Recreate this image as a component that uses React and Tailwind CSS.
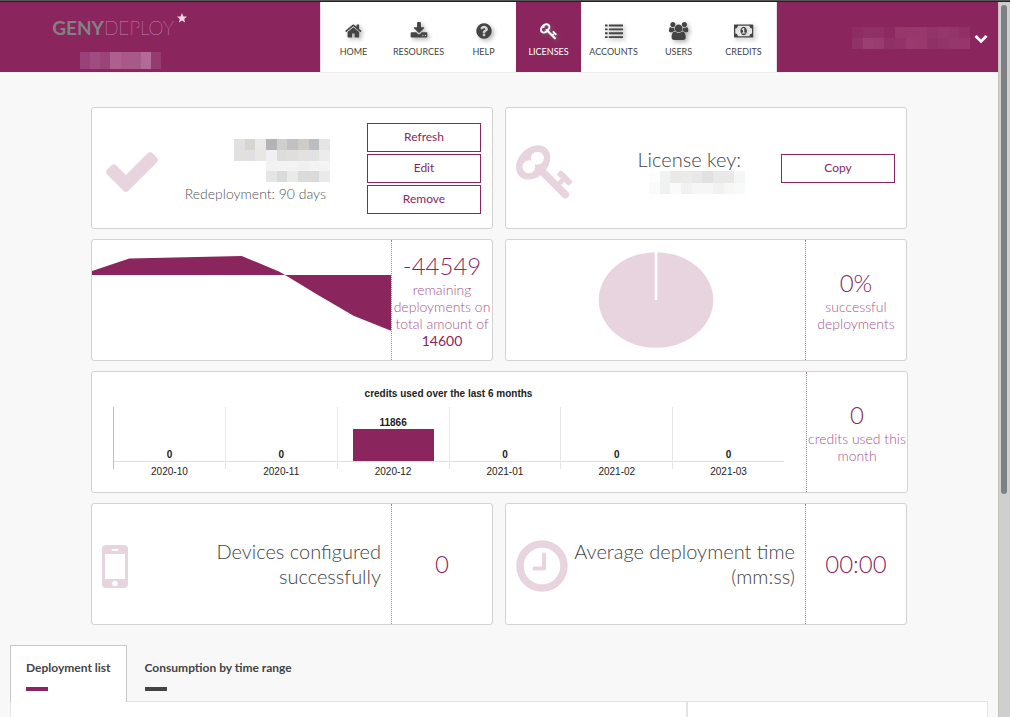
import React, { useState } from "react";

const ICONS = {
  home: {
    width: 1664,
    d: "M1408 992v480q0 26-19 45t-45 19h-384v-384h-256v384h-384q-26 0-45-19t-19-45v-480q0-1 .5-3t.5-3l575-474 575 474q1 2 1 6zm223-69l-62 74q-8 9-21 11h-3q-13 0-21-7l-692-577-692 577q-12 8-24 7-13-2-21-11l-62-74q-8-10-7-23.500t11-21.500l719-599q32-26 76-26t76 26l244 204v-195q0-14 9-23t23-9h192q14 0 23 9t9 23v408l219 182q10 8 11 21.500t-7 23.500z",
  },
  download: {
    width: 1792,
    d: "M1344 1344q0-26-19-45t-45-19-45 19-19 45 19 45 45 19 45-19 19-45zm256 0q0-26-19-45t-45-19-45 19-19 45 19 45 45 19 45-19 19-45zm128-224v320q0 40-28 68t-68 28h-1472q-40 0-68-28t-28-68v-320q0-40 28-68t68-28h465l135 136q58 56 136 56t136-56l136-136h464q40 0 68 28t28 68zm-325-569q17 41-14 70l-448 448q-18 19-45 19t-45-19l-448-448q-31-29-14-70 17-39 59-39h256v-448q0-26 19-45t45-19h256q26 0 45 19t19 45v448h256q42 0 59 39z",
  },
  help: {
    width: 1792,
    d: "M1024 1376v-192q0-14-9-23t-23-9h-192q-14 0-23 9t-9 23v192q0 14 9 23t23 9h192q14 0 23-9t9-23zm256-672q0-88-55.5-163t-138.5-116-170-41q-243 0-371 213-15 24 8 42l132 100q7 6 19 6 16 0 25-12 53-68 86-92 34-24 86-24 48 0 85.5 26t37.5 59q0 38-20 61t-68 45q-63 28-115.5 86.5t-52.5 125.5v36q0 14 9 23t23 9h192q14 0 23-9t9-23q0-19 21.500-49.500t54.500-49.500q32-18 49-28.500t46-35 44.500-48 28-60.500 12.500-81zm384 192q0 209-103 385.500t-279.500 279.500-385.500 103-385.500-103-279.500-279.500-103-385.500 103-385.500 279.500-279.500 385.500-103 385.500 103 279.500 279.500 103 385.500z",
  },
  key: {
    width: 1792,
    d: "M832 512q0-80-56-136t-136-56-136 56-56 136q0 42 19 83-41-19-83-19-80 0-136 56t-56 136 56 136 136 56 136-56 56-136q0-42-19-83 41 19 83 19 80 0 136-56t56-136zm851 704q0 17-49 66t-66 49q-9 0-28.500-16t-36.500-33-38.500-40-24.500-26l-96 96 220 220q28 28 28 68 0 42-39 81t-81 39q-40 0-68-28l-671-671q-176 131-365 131-163 0-265.500-102.500t-102.500-265.500q0-160 95-313t248-248 313-95q163 0 265.500 102.500t102.500 265.500q0 189-131 365l355 355 96-96q-3-3-26-24.500t-40-38.500-33-36.500-16-28.500q0-17 49-66t66-49q13 0 23 10 6 6 46 44.500t82 79.500 86.500 86 73 78 28.500 41z",
  },
  list: {
    width: 1792,
    d: "M0 256h256v192h-256zM384 256h1408v192h-1408zM0 640h256v192h-256zM384 640h1408v192h-1408zM0 1024h256v192h-256zM384 1024h1408v192h-1408zM0 1408h256v192h-256zM384 1408h1408v192h-1408z",
  },
  users: {
    width: 1920,
    d: "M593 896q-162 5-265 128h-134q-82 0-138-40.500t-56-118.500q0-353 124-353 6 0 43.500 21t97.500 42.500 119 21.500q67 0 133-23-5 37-5 66 0 139 81 256zm1071 637q0 120-73 189.500t-194 69.500h-874q-121 0-194-69.500t-73-189.500q0-53 3.500-103.500t14-109 26.500-108.500 43-97.500 62-81 85.500-53.500 111.500-20q10 0 43 21.500t73 48 107 48 135 21.500 135-21.500 107-48 73-48 43-21.500q61 0 111.500 20t85.500 53.500 62 81 43 97.500 26.500 108.500 14 109 3.500 103.500zm-1024-1277q0 106-75 181t-181 75-181-75-75-181 75-181 181-75 181 75 75 181zm704 384q0 159-112.500 271.500t-271.500 112.500-271.500-112.500-112.500-271.500 112.500-271.500 271.500-112.500 271.500 112.500 112.500 271.500zm576 225q0 78-56 118.500t-138 40.500h-134q-103-123-265-128 81-117 81-256 0-29-5-66 66 23 133 23 59 0 119-21.500t97.500-42.500 43.500-21q124 0 124 353zm-128-609q0 106-75 181t-181 75-181-75-75-181 75-181 181-75 181 75 75 181z",
  },
  money: {
    width: 1920,
    d: "M768 1152h384v-96h-128v-448h-114l-148 137 77 80q42-37 55-57h2v288h-128v96zm512-256q0 70-21 142t-59.500 134-101.500 101-138 39-138-39-101.500-101-59.500-134-21-142 21-142 59.500-134 101.500-101 138-39 138 39 101.500 101 59.500 134 21 142zm512 256v-512q-106 0-181-75t-75-181h-1152q0 106-75 181t-181 75v512q106 0 181 75t75 181h1152q0-106 75-181t181-75zm128-832v1152q0 26-19 45t-45 19h-1792q-26 0-45-19t-19-45v-1152q0-26 19-45t45-19h1792q26 0 45 19t19 45z",
  },
  check: {
    width: 1792,
    d: "M1671 566q0 40-28 68l-724 724-136 136q-28 28-68 28t-68-28l-136-136-362-362q-28-28-28-68t28-68l136-136q28-28 68-28t68 28l294 295 656-657q28-28 68-28t68 28l136 136q28 28 28 68z",
  },
  chevron: {
    width: 1792,
    d: "M1683 808l-742 741q-19 19-45 19t-45-19l-742-741q-19-19-19-45.500t19-45.500l166-165q19-19 45-19t45 19l531 531 531-531q19-19 45-19t45 19l166 165q19 19 19 45.500t-19 45.500z",
  },
};

const NAV = [
  { label: "HOME", icon: "home" },
  { label: "RESOURCES", icon: "download" },
  { label: "HELP", icon: "help" },
  { label: "LICENSES", icon: "key" },
  { label: "ACCOUNTS", icon: "list" },
  { label: "USERS", icon: "users" },
  { label: "CREDITS", icon: "money" },
];

const CREDITS = [
  { month: "2020-10", used: 0 },
  { month: "2020-11", used: 0 },
  { month: "2020-12", used: 11866 },
  { month: "2021-01", used: 0 },
  { month: "2021-02", used: 0 },
  { month: "2021-03", used: 0 },
];

const TABS = ["Deployment list", "Consumption by time range"];

// Masked values, one colour per block
const MASK_CUSTOMER = [["#98417a", "#9f4c80", "#9a457a", "#ad608f", "#aa5886", "#a65a88", "#b26b98", "#963b70"]];
const MASK_USER = [
  ["#8e2c63", "#8f3067", "#912f67", "#8c2961", "#953769", "#97386c", "#97386c", "#92336a", "#95366c", "#93356b", "#903067"],
  ["#92326a", "#9a3f72", "#983c70", "#8f3067", "#913369", "#99396e", "#98396e", "#903166", "#92346a", "#95376c", "#95376c"],
];
const MASK_LICENSE = [
  ["#e0e0e0", "#d6d5d0", "#e9e8e6", "#b3b3b8", "#cfcfcf", "#c1c1c3", "#cfcbc7", "#babec1", "#e4e5e7"],
  ["#e1e0df", "#e0e0e0", "#e8e7e6", "#eef0f3", "#dcdcda", "#dedede", "#e3e2e1", "#e0e2e3", "#ececec"],
  ["#ffffff", "#ffffff", "#ffffff", "#f3f2f1", "#f3f3f3", "#f3f3f3", "#f0f0f1", "#f3f3f3", "#f3f3f3"],
  ["#ffffff", "#ffffff", "#ffffff", "#e5e5e5", "#d8dbda", "#eaeae9", "#dbdbdb", "#dbdbdb", "#e9eaec"],
];
const MASK_KEY = [
  ["#fdfdfd", "#f1f2f2", "#e9e9e7", "#ebebea", "#e8e8e8", "#e1e1e1", "#e9e9e9", "#e9e9e8", "#f5f7f6"],
  ["#fafaf8", "#f0f2f2", "#fafafa", "#f1f1f2", "#f6f6f6", "#f6f6f6", "#f1f1f1", "#f7f7f5", "#f8faf9"],
];

const Icon = ({ name, className }) => (
  <svg
    viewBox={`0 0 ${ICONS[name].width} 1792`}
    className={`shrink-0 fill-current overflow-visible ${className}`}
    aria-hidden="true"
  >
    <path d={ICONS[name].d} />
  </svg>
);

const Mask = ({ rows, className }) => (
  <svg
    viewBox={`0 0 ${rows[0].length} ${rows.length}`}
    preserveAspectRatio="none"
    shapeRendering="crispEdges"
    className={className}
    aria-hidden="true"
  >
    {rows.map((row, y) =>
      row.map((fill, x) => (
        <rect key={`${x}-${y}`} x={x} y={y} width="1" height="1" fill={fill} />
      ))
    )}
  </svg>
);

const Card = ({ className = "", children }) => (
  <section
    className={`flex h-[122px] rounded-[3px] border border-[#d3d3d3] bg-white ${className}`}
  >
    {children}
  </section>
);

const Stat = ({ value, children }) => (
  <div className="flex w-[101px] shrink-0 flex-col items-center justify-center border-l border-dotted border-[#b9759b] text-center text-[#8a265d]">
    <div className="text-2xl leading-[30px] font-light">{value}</div>
    {children && (
      <div className="text-sm leading-[17px] font-light text-[#a8568a]">
        {children}
      </div>
    )}
  </div>
);

const OutlineButton = ({ children }) => (
  <button
    type="button"
    className="h-[29px] w-[114px] shrink-0 cursor-pointer border border-[#8a265d] text-xs leading-4 text-[#8a265d]"
  >
    {children}
  </button>
);

function Header() {
  return (
    <header className="flex h-[71px] border-b border-[#eeeeee] bg-[#8a265d]">
      <div className="w-80 shrink-0">
        <div className="flex w-60 flex-col items-center pt-[14px]">
          <a href="#home" className="flex text-[19px] leading-6 text-[#f3dcea]">
            <span className="font-bold text-[#828282]">GENY</span>
            <span className="font-thin">DEPLOY</span>
            <svg viewBox="0 0 12 12" className="-mt-1 ml-0.5 h-3 w-3 fill-[#efd5e4]" aria-hidden="true">
              <path d="M6 1l1.400 3.400 3.600.2-2.800 2.300.9 3.600L6 8.500l-3.100 2 .9-3.600L1 4.600l3.600-.2z" />
            </svg>
          </a>
          <Mask rows={MASK_CUSTOMER} className="mt-3 h-[17px] w-[81px]" />
        </div>
      </div>

      <nav className="flex shrink-0 border-x border-[#e6e0e3] bg-white">
        {NAV.map((item) => (
          <a
            key={item.label}
            href={`#${item.label.toLowerCase()}`}
            className={`flex h-[70px] w-[65px] flex-col items-center pt-5 text-[9px] leading-3 ${
              item.label === "LICENSES"
                ? "bg-[#8a265d] text-white"
                : "text-[#444444]"
            }`}
          >
            <Icon
              name={item.icon}
              className="mb-1.5 h-[18px] drop-shadow-[2px_2px_2px_rgba(120,120,120,0.6)]"
            />
            {item.label}
          </a>
        ))}
      </nav>

      <div className="flex flex-1 items-center justify-end pt-0.5 pr-[10px]">
        <button type="button" aria-label="Account menu" className="flex cursor-pointer items-center gap-1 text-white">
          <Mask rows={MASK_USER} className="h-[22px] w-[118px]" />
          <Icon name="chevron" className="h-[14px]" />
        </button>
      </div>
    </header>
  );
}

function CreditsChart() {
  const max = 20400;
  return (
    <div className="min-w-0 flex-1 pt-4 pr-[22px] pl-[21px] font-['Liberation_Sans',sans-serif] text-[10px] text-[#222222]">
      <h2 className="text-center leading-3 font-bold">
        credits used over the last 6 months
      </h2>
      <div className="mt-[7px] grid grid-cols-6">
        {CREDITS.map((c) => (
          <div
            key={c.month}
            className="h-[62px] border-l border-[#e6e6e6] text-center leading-3 first:border-[#bdbdbd]"
          >
            <div className="flex h-[55px] flex-col items-center justify-end border-b border-[#e0e0e0]">
              <span className="font-bold">{c.used}</span>
              <div
                className="w-[81px] bg-[#8a265d]"
                style={{ height: Math.round((c.used / max) * 55) }}
              />
            </div>
            <div className="pt-1">{c.month}</div>
          </div>
        ))}
      </div>
    </div>
  );
}

function Dashboard() {
  return (
    <div className="mx-auto mt-[34px] grid w-full max-w-[816px] grid-cols-2 gap-x-3 gap-y-[10px]">
      <Card className="items-center pr-[11px] pl-[10px]">
        <Icon name="check" className="mt-1.5 h-[60px] text-[#e8d4df]" />
        <div className="mr-[37px] flex flex-1 flex-col items-end pt-2">
          <Mask rows={MASK_LICENSE} className="h-[43px] w-24" />
          <p className="pr-1 text-sm leading-6 font-light text-[#555555]">
            Redeployment: 90 days
          </p>
        </div>
        <div className="flex flex-col gap-0.5">
          <OutlineButton>Refresh</OutlineButton>
          <OutlineButton>Edit</OutlineButton>
          <OutlineButton>Remove</OutlineButton>
        </div>
      </Card>

      <Card className="items-center pr-[11px] pl-[10px]">
        <Icon name="key" className="mt-1.5 h-[60px] text-[#e8d4df]" />
        <div className="mr-9 flex flex-1 flex-col items-end pt-1">
          <h2 className="pr-1 text-xl leading-6 font-light text-[#444444]">
            License key:
          </h2>
          <Mask rows={MASK_KEY} className="h-[23px] w-24" />
        </div>
        <OutlineButton>Copy</OutlineButton>
      </Card>

      <Card>
        <svg
          viewBox="0 0 299 120"
          preserveAspectRatio="none"
          className="h-full min-w-0 flex-1"
          role="img"
          aria-label="Remaining deployments"
        >
          <path
            d="M0 31L37.300 18.400 149.700 16 187.500 31.700 193 35 226 55 261.500 75.700 299 90.700V35H0z"
            fill="#8a265d"
          />
        </svg>
        <Stat value="-44549">
          remaining deployments on total amount of{" "}
          <span className="font-normal text-[#8a265d]">14600</span>
        </Stat>
      </Card>

      <Card>
        <div className="flex flex-1 items-center justify-center">
          <svg viewBox="0 0 116 98" className="h-[98px] w-[116px]" role="img" aria-label="Deployment success rate">
            <ellipse cx="58" cy="49" rx="57.300" ry="47.800" fill="#e8d4df" />
            <path d="M58 0V49" stroke="#ffffff" strokeWidth="2.500" />
          </svg>
        </div>
        <Stat value="0%">successful deployments</Stat>
      </Card>

      <Card className="col-span-2 -mr-px">
        <CreditsChart />
        <Stat value="0">credits used this month</Stat>
      </Card>

      <Card>
        <div className="flex flex-1 items-center justify-between px-[10px]">
          <svg viewBox="0 0 26 43" className="mt-1 h-[43px] w-[26px]" aria-hidden="true">
            <rect width="26" height="43" rx="4" fill="#e8d4df" />
            <rect x="3" y="9" width="20" height="25" fill="#ffffff" />
            <rect x="9.500" y="4" width="7" height="2" rx="1" fill="#ffffff" />
            <circle cx="13" cy="38.500" r="2.800" fill="#ffffff" />
          </svg>
          <h2 className="w-44 text-right text-xl leading-[25px] font-light text-[#444444]">
            Devices configured successfully
          </h2>
        </div>
        <Stat value="0" />
      </Card>

      <Card>
        <div className="flex flex-1 items-center justify-between px-[10px]">
          <svg viewBox="0 0 52 52" className="mt-1 h-[52px] w-[52px]" fill="none" stroke="#e8d4df" aria-hidden="true">
            <circle cx="26" cy="26" r="22" strokeWidth="7.400" />
            <path d="M28 14.500V28.500H18.500" strokeWidth="4.200" strokeLinecap="round" strokeLinejoin="round" />
          </svg>
          <h2 className="text-right text-xl leading-[25px] font-light text-[#444444]">
            Average deployment time
            <br />
            (mm:ss)
          </h2>
        </div>
        <Stat value="00:00" />
      </Card>
    </div>
  );
}

export default function App() {
  const [tab, setTab] = useState(TABS[0]);

  return (
    <div className="flex min-h-screen flex-col bg-[#f8f8f8] font-[Lato,sans-serif]">
      <div className="h-0.5 border-b border-[#222222] bg-[#555555]" />

      <div className="flex flex-1">
        <main className="flex min-w-0 flex-1 flex-col">
          <Header />
          <Dashboard />

          <div className="mx-[10px] mt-5 flex flex-1 flex-col">
            <div role="tablist" className="flex">
              {TABS.map((name) => (
                <button
                  key={name}
                  type="button"
                  role="tab"
                  aria-selected={tab === name}
                  onClick={() => setTab(name)}
                  className={`relative -mb-px flex h-[57px] cursor-pointer flex-col items-start border border-b-0 pt-[14px] text-xs leading-4 font-bold text-[#444444] ${
                    tab === name
                      ? "border-[#c8c8c8] bg-white px-[15px]"
                      : "border-transparent px-[17px]"
                  }`}
                >
                  {name}
                  <span
                    className={`mt-[11px] h-1 w-[22px] ${
                      tab === name ? "bg-[#8a265d]" : "bg-[#444444]"
                    }`}
                  />
                </button>
              ))}
            </div>
            <div role="tabpanel" className="flex flex-1 border border-b-0 border-[#e3e3e3] bg-white">
              <div className="flex-1" />
              <div className="w-[301px] border-l-2 border-[#e3e3e3]" />
            </div>
          </div>
        </main>

        {/* scroll track */}
        <div className="w-3 shrink-0 border-l border-[#c5c1bd] bg-[#cfcfcf] px-0.5 pt-[3px]">
          <div className="h-[489px] w-1.5 rounded-full bg-[#7d8181]" />
        </div>
      </div>
    </div>
  );
}
